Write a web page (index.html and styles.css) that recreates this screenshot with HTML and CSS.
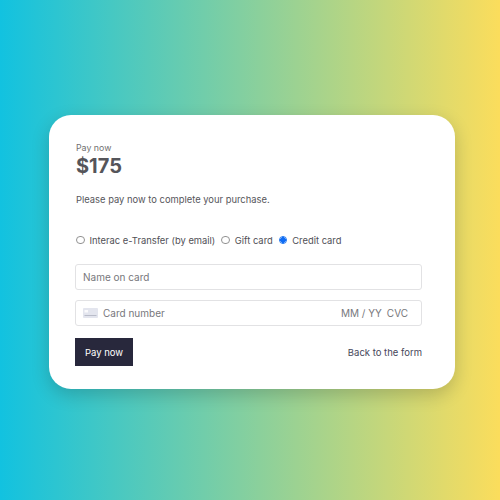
FILE: index.html
```html
<!DOCTYPE html>
<html lang="en">
<head>
<meta charset="utf-8">
<title>Pay now</title>
<link rel="stylesheet" href="styles.css">
</head>
<body>
<main class="card">
  <div class="eyebrow">Pay now</div>
  <div class="amount">$175</div>
  <p class="note">Please pay now to complete your purchase.</p>
  <div class="methods">
    <label class="method"><input type="radio" name="m"><span>Interac e-Transfer (by email)</span></label>
    <label class="method"><input type="radio" name="m"><span>Gift card</span></label>
    <label class="method"><input type="radio" name="m" checked><span>Credit card</span></label>
  </div>
  <div class="field name">Name on card</div>
  <div class="field number">
    <svg class="card-icon" width="15" height="10" viewBox="0 0 15 10"><rect width="15" height="10" rx="1" fill="#e3e5ee"/><rect x="1.5" y="2" width="3.5" height="2.5" fill="#fafafc"/><rect x="1.5" y="7" width="12" height="1" fill="#b9bcc9"/></svg>
    <span class="grow">Card number</span>
    <span>MM / YY</span>
    <span>CVC</span>
  </div>
  <div class="actions">
    <button class="pay">Pay now</button>
    <a class="back">Back to the form</a>
  </div>
</main>
</body>
</html>
```
FILE: styles.css
```css
* { box-sizing: border-box; }
html, body { margin: 0; height: 500px; }
body {
  width: 500px;
  display: flex;
  align-items: flex-start;
  justify-content: center;
  padding: 115px 0 0 4px;
  overflow: hidden;
  background: linear-gradient(90deg, #12c2e0 0%, #fbdd5c 100%);
  font-family: Inter, "Liberation Sans", sans-serif;
}
.card {
  width: 406px;
  height: 274px;
  background: #fff;
  border-radius: 22px;
  padding: 27px 33px 0 27px;
  box-shadow: 0 6px 18px rgba(0, 0, 0, 0.18);
  color: #4a4a4f;
}
.eyebrow { font-size: 8.8px; line-height: 12px; color: #707070; }
.amount { font-size: 20px; line-height: 24px; font-weight: 700; color: #55555a; }
.note { margin: 15px 0 0; font-size: 9.4px; line-height: 14px; color: #56565b; }
.methods { display: flex; gap: 6px; margin-top: 26px; height: 14px; align-items: center; font-size: 9.4px; color: #505056; }
.method { display: flex; align-items: center; gap: 5px; }
.method input { appearance: none; margin: 0; width: 8.5px; height: 8.5px; border: 1px solid #929292; border-radius: 50%; background: #fff; }
.method input:checked { border: 1px solid #1a73f0; background: radial-gradient(circle, #0f6cf5 0 2.6px, #fff 3px); }
.field {
  display: flex;
  align-items: center;
  height: 26px;
  margin-left: -1px;
  border: 1px solid #e2e2e4;
  border-radius: 3px;
  padding: 0 13px 0 7px;
  font-size: 10px;
  color: #77777c;
  gap: 5px;
}
.name { margin-top: 17px; }
.number { margin-top: 10px; }
.grow { flex: 1; }
.actions { display: flex; justify-content: space-between; align-items: center; margin-top: 12px; margin-left: -1px; }
.pay {
  width: 58px;
  height: 28px;
  border: 0;
  padding: 0;
  background: #28283c;
  color: #fff;
  font: 9.5px Inter, "Liberation Sans", sans-serif;
}
.back { font-size: 9.5px; color: #46465a; }
```
